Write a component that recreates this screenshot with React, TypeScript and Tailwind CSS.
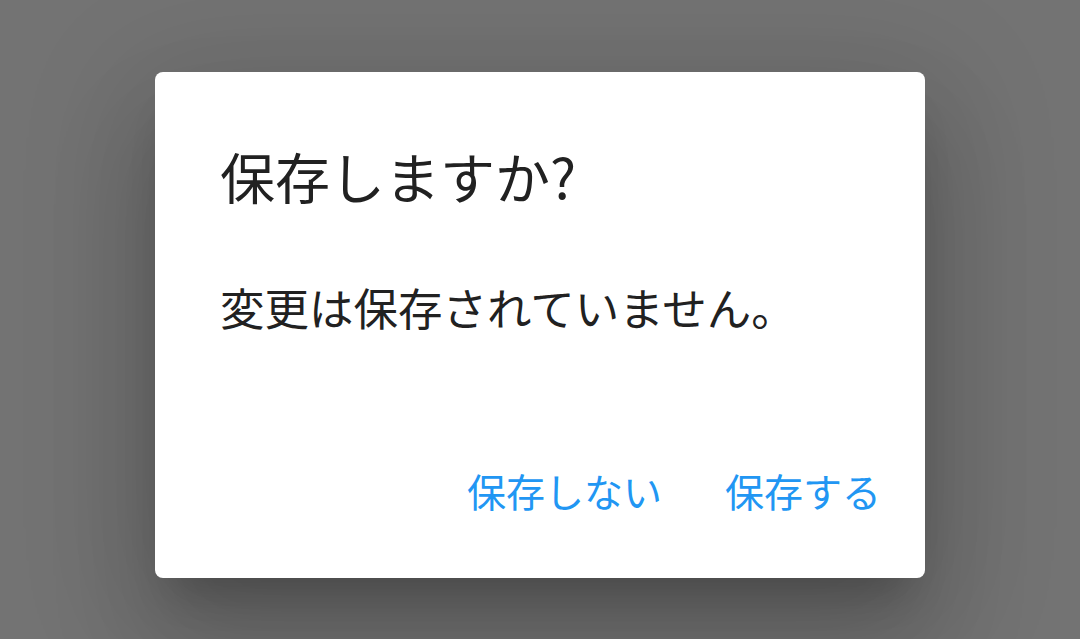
export default function App() {
  return (
    <div
      className="flex h-[639px] w-full justify-center bg-[#737373] pt-[72px]"
      style={{ fontFamily: '"Noto Sans CJK JP", "Noto Sans", sans-serif' }}
    >
      <div className="flex h-[506px] w-[770px] flex-col rounded-lg bg-white pl-[65px] pr-[44px] pt-[76px] pb-[68px] shadow-[0_30px_40px_-19px_rgba(0,0,0,0.2),0_65px_103px_8px_rgba(0,0,0,0.14),0_24px_124px_22px_rgba(0,0,0,0.12)]">
        <h2 className="text-[55px] leading-[55px] font-normal text-[#212121]">保存しますか?</h2>
        <p className="mt-[82px] text-[44.5px] leading-[44.5px] text-[#212121]">変更は保存されていません。</p>
        <div className="mt-auto flex justify-end gap-[63px]">
          <button className="text-[39px] leading-[39px] text-[#2196f3]">保存しない</button>
          <button className="text-[39px] leading-[39px] text-[#2196f3]">保存する</button>
        </div>
      </div>
    </div>
  );
}
